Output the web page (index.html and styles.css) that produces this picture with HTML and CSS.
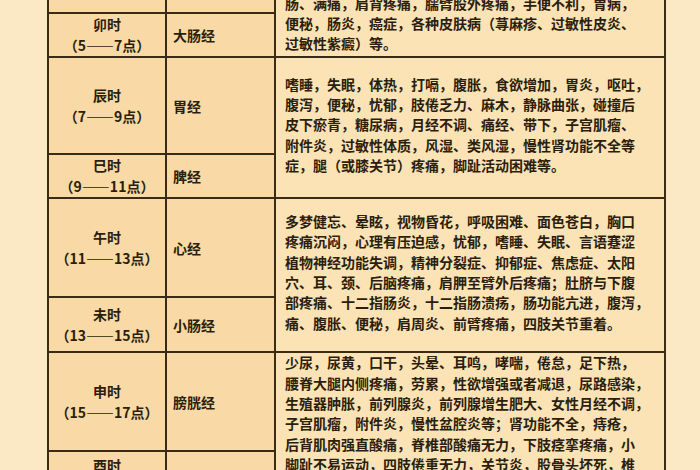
FILE: index.html
```html
<!DOCTYPE html>
<html lang="zh-CN">
<head>
<meta charset="utf-8">
<title>十二时辰经络表</title>
<link rel="stylesheet" href="styles.css">
</head>
<body>
<div class="sheet">
  <div class="time r1"><span>寅时</span><span>（3——5点）</span></div>
  <div class="meridian r1">肺经</div>
  <div class="desc b1">咳嗽，气喘，胸闷，咽喉肿痛，感冒，鼻塞流涕，<br>胸部胀满，手臂内侧疼痛，肩背酸痛，皮肤干燥，<br>肠、满痛，肩背疼痛，臑臂股外疼痛，手便不利，胃病，<br>便秘，肠炎，癌症，各种皮肤病（荨麻疹、过敏性皮炎、<br>过敏性紫癜）等。</div>

  <div class="time r2"><span>卯时</span><span>（5——7点）</span></div>
  <div class="meridian r2">大肠经</div>

  <div class="time r3"><span>辰时</span><span>（7——9点）</span></div>
  <div class="meridian r3">胃经</div>
  <div class="desc b2">嗜睡，失眠，体热，打嗝，腹胀，食欲增加，胃炎，呕吐，<br>腹泻，便秘，忧郁，肢倦乏力、麻木，静脉曲张，碰撞后<br>皮下瘀青，糖尿病，月经不调、痛经、带下，子宫肌瘤、<br>附件炎，过敏性体质，风湿、类风湿，慢性肾功能不全等<br>症，腿（或膝关节）疼痛，脚趾活动困难等。</div>

  <div class="time r4"><span>巳时</span><span>（9——11点）</span></div>
  <div class="meridian r4">脾经</div>

  <div class="time r5"><span>午时</span><span>（11——13点）</span></div>
  <div class="meridian r5">心经</div>
  <div class="desc b3">多梦健忘、晕眩，视物昏花，呼吸困难、面色苍白，胸口<br>疼痛沉闷，心理有压迫感，忧郁，嗜睡、失眠、言语蹇涩<br>植物神经功能失调，精神分裂症、抑郁症、焦虑症、太阳<br>穴、耳、颈、后脑疼痛，肩胛至臂外后疼痛；肚脐与下腹<br>部疼痛、十二指肠炎，十二指肠溃疡，肠功能亢进，腹泻，<br>痛、腹胀、便秘，肩周炎、前臂疼痛，四肢关节重着。</div>

  <div class="time r6"><span>未时</span><span>（13——15点）</span></div>
  <div class="meridian r6">小肠经</div>

  <div class="time r7"><span>申时</span><span>（15——17点）</span></div>
  <div class="meridian r7">膀胱经</div>
  <div class="desc b4">少尿，尿黄，口干，头晕、耳鸣，哮喘，倦怠，足下热，<br>腰脊大腿内侧疼痛，劳累，性欲增强或者减退，尿路感染，<br>生殖器肿胀，前列腺炎，前列腺增生肥大、女性月经不调，<br>子宫肌瘤，附件炎，慢性盆腔炎等；肾功能不全，痔疮，<br>后背肌肉强直酸痛，脊椎部酸痛无力，下肢痉挛疼痛，小<br>脚趾不易运动，四肢倦重无力，关节炎，股骨头坏死，椎<br>间盘突出，腰膝酸软无力，水肿，夜尿多等。</div>

  <div class="time r8"><span>酉时</span><span>（17——19点）</span></div>
  <div class="meridian r8">肾经</div>
</div>
</body>
</html>
```
FILE: styles.css
```css
html, body {
  margin: 0;
  padding: 0;
}

body {
  width: 700px;
  height: 470px;
  overflow: hidden;
  background: #fbe8c5;
  font-family: "Noto Sans CJK SC", "Noto Sans CJK JP", sans-serif;
  font-weight: 700;
  color: #2b1e0d;
}

.sheet {
  margin: -62px 0 0 47px;
  width: 619px;
  box-sizing: border-box;
  padding: 2px;
  display: grid;
  grid-template-columns: 116px 107px 388px;
  grid-template-rows: 72px 42px 95px 42px 97px 53px 97px 48px;
  gap: 2px;
  background: #3a2b15;
}

.time,
.meridian,
.desc {
  background: #f9daa6;
  font-size: 14px;
}

.time {
  grid-column: 1;
  display: flex;
  flex-direction: column;
  align-items: center;
  justify-content: center;
  line-height: 21px;
}

.meridian {
  grid-column: 2;
  display: flex;
  align-items: center;
  padding-left: 6px;
}

.desc {
  grid-column: 3;
  display: flex;
  align-items: center;
  padding: 4px 4px 10px 9px;
  font-size: 14px;
  line-height: 20.3px;
  white-space: nowrap;
  background: #fbe3b6;
}

.b1 { grid-row: 1 / span 2; padding-top: 14px; padding-bottom: 4px; }
.b2 { grid-row: 3 / span 2; }
.b3 { grid-row: 5 / span 2; }
.b4 { grid-row: 7 / span 2; }

.r1 { grid-row: 1; }
.r2 { grid-row: 2; }
.r3 { grid-row: 3; }
.r4 { grid-row: 4; }
.r5 { grid-row: 5; }
.r6 { grid-row: 6; }
.r7 { grid-row: 7; }
.r8 { grid-row: 8; }
```
